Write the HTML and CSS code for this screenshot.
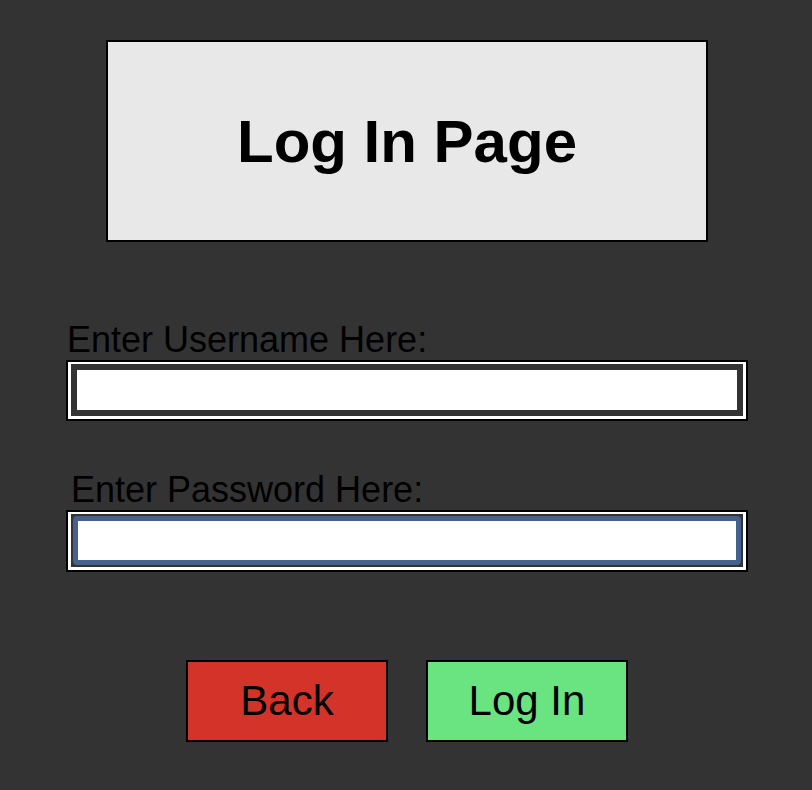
FILE: index.html
```html
<!DOCTYPE html>
<html lang="en">
<head>
<meta charset="utf-8">
<title>Log In Page</title>
<link rel="stylesheet" href="styles.css">
</head>
<body>
<main class="page">
  <header class="title-box">
    <h1 class="title">Log In Page</h1>
  </header>
  <form class="login-form">
    <label class="field-label field-label-user" for="username">Enter Username Here:</label>
    <div class="field-frame">
      <input class="field-input" id="username" type="text">
    </div>
    <label class="field-label field-label-pass" for="password">Enter Password Here:</label>
    <div class="field-frame">
      <span class="focus-wrap">
        <input class="field-input field-input-focus" id="password" type="password">
      </span>
    </div>
    <div class="actions">
      <button type="button" class="btn btn-back">Back</button>
      <button type="button" class="btn btn-login">Log In</button>
    </div>
  </form>
</main>
</body>
</html>
```

FILE: styles.css
```css
* {
  box-sizing: border-box;
}

html, body {
  margin: 0;
  padding: 0;
  background: #333333;
}

body {
  font-family: "Liberation Sans", Arial, Helvetica, sans-serif;
  color: #000;
  width: 812px;
  height: 790px;
  overflow: hidden;
}

.page {
  display: flex;
  flex-direction: column;
  padding-top: 40px;
}

.title-box {
  width: 602px;
  height: 202px;
  margin-left: 106px;
  background: #e8e8e8;
  border: 2px solid #000;
  display: flex;
  align-items: center;
  justify-content: center;
}

.title {
  margin: 0;
  padding-top: 2px;
  font-size: 60px;
  font-weight: bold;
  line-height: 1;
}

.login-form {
  display: flex;
  flex-direction: column;
  width: 682px;
  margin-left: 66px;
  margin-top: 78px;
}

.field-label {
  display: block;
  font-size: 36px;
  line-height: 40px;
  height: 40px;
  color: #000;
}

.field-label-user {
  margin-left: 1px;
}

.field-label-pass {
  margin-left: 5px;
  margin-top: 49px;
}

.field-frame {
  display: flex;
  background: #fff;
  border: 2px solid #000;
  padding: 2px 3px 3px 3px;
}

.field-input {
  display: block;
  width: 100%;
  height: 52px;
  margin: 0;
  border: 6px solid #333333;
  background: #fff;
  outline: none;
  font-size: 20px;
  padding: 0 6px;
  border-radius: 0;
}

.focus-wrap {
  display: block;
  width: 100%;
  background: #333333;
  padding: 2px;
}

.field-input-focus {
  height: 49px;
  border: 5px solid #45628f;
  border-radius: 4px;
}

.actions {
  display: flex;
  justify-content: center;
  gap: 38px;
  margin-top: 88px;
}

.btn {
  width: 202px;
  height: 82px;
  border: 2px solid #000;
  border-radius: 0;
  font-family: "Liberation Sans", Arial, Helvetica, sans-serif;
  font-size: 42px;
  color: #000;
  display: flex;
  align-items: center;
  justify-content: center;
  padding: 0;
  margin: 0;
}

.btn-back {
  background: #d33328;
}

.btn-login {
  background: #6ae480;
}
```
